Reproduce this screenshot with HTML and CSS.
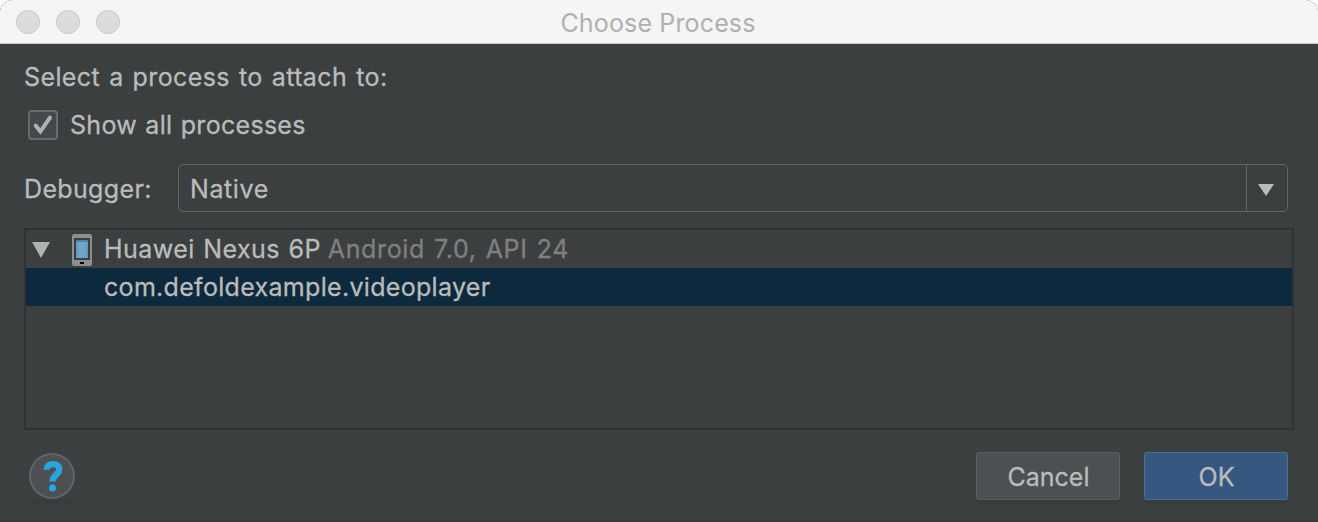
FILE: index.html
```html
<!DOCTYPE html>
<html lang="en">
<head>
<meta charset="utf-8">
<title>Choose Process</title>
<link rel="stylesheet" href="styles.css">
</head>
<body>
<main class="dialog">
  <header class="titlebar">
    <div class="lights"><i class="light"></i><i class="light"></i><i class="light"></i></div>
    <h1 class="title">Choose Process</h1>
  </header>
  <section class="content">
    <p class="prompt"><span class="t-prompt">Select a process to attach to:</span></p>
    <label class="check-row">
      <span class="checkbox"><svg width="30" height="30" viewBox="0 0 30 30"><path d="M7.700 15.500l4.700 6L22 7.700" fill="none" stroke="#b0b0b0" stroke-width="4" stroke-linecap="round"/></svg></span>
      <span class="t-show">Show all processes</span>
    </label>
    <div class="field">
      <span class="field-label">Debugger:</span>
      <div class="select">
        <span class="select-value">Native</span>
        <span class="select-arrow"><svg width="16" height="12" viewBox="0 0 16 12"><path d="M0 0h16L8 12z" fill="#bbb"/></svg></span>
      </div>
    </div>
    <div class="tree">
      <div class="row device">
        <svg class="twisty" width="18" height="16" viewBox="0 0 18 16"><path d="M0 0h18L9 16z" fill="#afb1b3"/></svg>
        <svg class="phone" width="20" height="32" viewBox="0 0 20 32"><rect width="20" height="32" rx="2" fill="#8e8e8e"/><path d="M2 4h16v22H2z" fill="#3c3f41"/><path d="M4 6h12v18H4z" fill="#5a9dc2"/><path d="M4 6h12v2H4z" fill="#4585ae"/><path d="M6 8h8v16H6z" fill="#72a5c5"/><path d="M8 28h4v2H8z" fill="#000"/></svg>
        <span class="t-device">Huawei Nexus 6P</span>
        <span class="t-os">Android 7.0, API 24</span>
      </div>
      <div class="row selected"><span class="t-proc">com.defoldexample.videoplayer</span></div>
    </div>
    <footer class="actions">
      <button class="help" aria-label="Help"><svg width="46" height="46" viewBox="0 0 46 46"><path d="M17.500 16.700C17.500 13 20 11.100 23.900 11.100c4.100 0 6.300 1.900 6.300 5.300 0 5.300-6.700 5.300-6.700 12.200" fill="none" stroke="#27a5de" stroke-width="6.200"/><circle cx="23.500" cy="35" r="3.500" fill="#1fabe9"/></svg></button>
      <button class="btn cancel">Cancel</button>
      <button class="btn ok">OK</button>
    </footer>
  </section>
</main>
</body>
</html>
```
FILE: styles.css
```css
* { box-sizing: border-box; }
body { margin: 0; background: #fff; }
.dialog {
  width: 1318px; height: 522px; overflow: hidden;
  display: flex; flex-direction: column;
  background: #3c3f40; color: #bbb;
  border-radius: 12px 12px 0 0;
  border-bottom: 3px solid #3b383b;
  font: 25px/30px Inter, "Liberation Sans", sans-serif;
  white-space: nowrap;
}
.content { -webkit-text-stroke: 0.3px currentColor; }
.titlebar {
  flex: none; height: 44px; display: grid;
  grid-template-columns: 120px 1fr 122px; align-items: center;
  background: #f5f5f5; border-bottom: 1px solid #c9cbcb;
}
.lights { display: flex; gap: 16px; padding-left: 16px; }
.light { width: 24px; height: 24px; border-radius: 50%; background: #dcdcdc; border: 1px solid #c6c6c6; }
.title { margin: 2px 0 0; font-size: 25px; font-weight: 400; text-align: center; color: #b0b0b0; letter-spacing: 0.15px; }
.content { flex: 1; padding: 18px 24px 0; display: flex; flex-direction: column; }
.prompt { margin: 0; height: 30px; }
.t-prompt { letter-spacing: 0.4px; word-spacing: 1.6px; }
.t-show { letter-spacing: 0.3px; word-spacing: 1px; }
.check-row { display: flex; align-items: center; gap: 12px; height: 30px; margin: 18px 0 0 4px; }
.checkbox { width: 30px; height: 30px; border: 2px solid #6b6b6b; border-radius: 4px; background: #43494a; }
.checkbox svg { display: block; margin: -2px; }
.field { display: flex; align-items: center; margin-top: 24px; height: 48px; }
.field-label { width: 154px; padding-top: 2px; letter-spacing: 0.35px; }
.select { width: 1110px; height: 48px; display: flex; border: 1px solid #646464; border-radius: 5px; }
.select-value { flex: 1; padding: 9px 0 0 11px; letter-spacing: 0.6px; }
.select-arrow { width: 41px; border-left: 1px solid #646464; padding: 19px 0 0 11px; }
.select-arrow svg, .twisty, .phone { display: block; }
.tree { width: 1270px; height: 202px; margin-top: 16px; border: 2px solid #323232; }
.row { height: 38px; display: flex; align-items: center; }
.device { padding-left: 6px; }
.twisty { margin-top: 2px; }
.phone { margin: 2px 12px 0 22px; }
.t-device { letter-spacing: 0.45px; word-spacing: 1px; }
.t-os { color: #808080; margin-left: 7px; letter-spacing: 0.65px; word-spacing: 1.4px; }
.t-proc { letter-spacing: 0.31px; }
.selected { background: #0d293e; padding-left: 78px; }
.actions { display: flex; align-items: center; margin-top: 22px; height: 48px; padding-right: 6px; }
.help { position: relative; width: 46px; height: 46px; padding: 0; margin: 0 auto 0 5px; border: 2px solid #616466; border-radius: 50%; background: #4c5052; }
.help::after { content: ""; position: absolute; left: -1px; top: 45px; width: 44px; height: 4px; background: #393b3d; }
.help svg { display: block; margin: -2px; }
.btn { width: 144px; height: 48px; margin-left: 24px; padding: 2px 0 0 1px; font: inherit; color: #bbb; border: 1px solid #5e6060; border-radius: 3px; background: #4c5052; box-shadow: 0 4px 0 #393b3d; }
.ok { background: #365880; border-color: #4c708c; }
```
